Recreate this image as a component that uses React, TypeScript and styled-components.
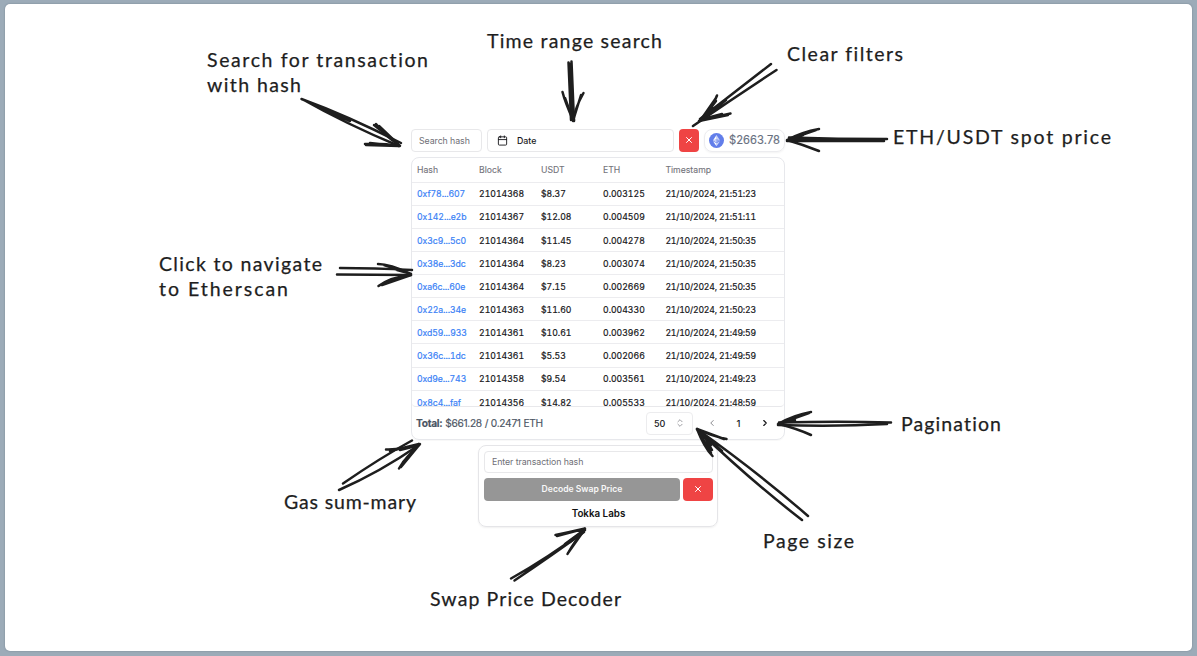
import React from 'react';
import styled, { createGlobalStyle } from 'styled-components';
import { Calendar, ChevronLeft, ChevronRight, ChevronsUpDown, X } from 'lucide-react';

const GlobalStyle = createGlobalStyle`
  * { box-sizing: border-box; }
  body { margin: 0; background: #9cabb8; font-family: Inter, "Liberation Sans", sans-serif; }
  button, input { font-family: inherit; }
`;

const Page = styled.div`
  height: 656px;
  padding: 4px 5px 5px;
  background: #9cabb8;
`;

const Board = styled.main`
  position: relative;
  height: 647px;
  border-radius: 5px;
  background: #fff;
  box-shadow: 0 0 2px #71808e;
  padding: 124px 0 0 406px;
`;

const Widget = styled.div`
  width: 374px;
  display: flex;
  flex-direction: column;
  align-items: center;
`;

const Toolbar = styled.div`
  width: 100%;
  height: 24px;
  display: flex;
  align-items: center;
  gap: 5px;
`;

const Field = styled.input<{ $width: string }>`
  width: ${(p) => p.$width};
  height: 23px;
  padding: 0 7px;
  border: 1px solid #e8e8ea;
  border-radius: 4px;
  font-size: 8.8px;
  letter-spacing: -0.08px;
  outline: none;
  &::placeholder { color: #707077; opacity: 1; }
`;

const DateButton = styled.button`
  flex: 1;
  height: 23px;
  display: flex;
  align-items: center;
  gap: 9px;
  padding: 0 9px;
  border: 1px solid #e8e8ea;
  border-radius: 4px;
  background: #fff;
  color: #18181b;
  font-size: 8.8px;
  font-weight: 500;
`;

const ClearButton = styled.button<{ $width: number }>`
  width: ${(p) => p.$width}px;
  height: 23px;
  display: flex;
  align-items: center;
  justify-content: center;
  padding: 0;
  border: 0;
  border-radius: 4px;
  background: #ef4444;
  color: #fff;
`;

const PriceBadge = styled.div`
  width: 81px;
  height: 23px;
  display: flex;
  align-items: center;
  gap: 5px;
  padding-left: 4px;
  border: 1px solid #ececef;
  border-radius: 8px;
  box-shadow: 0 1px 2px #0000000d;
  color: #687080;
  font-size: 11.2px;
  letter-spacing: 0.05px;
  -webkit-text-stroke: 0.15px;
`;

const Card = styled.section`
  width: 374px;
  height: 283px;
  margin-top: 4.5px;
  border: 1px solid #e7e8ec;
  border-radius: 8px;
  box-shadow: 0 1px 1px #00000008;
  overflow: hidden;
`;

const TableScroll = styled.div`
  height: 249.5px;
  overflow: hidden;
  border-bottom: 1px solid #e8e8eb;
  border-radius: 0 0 4px 4px;
`;

const Row = styled.div<{ $head?: boolean }>`
  display: grid;
  grid-template-columns: 62px 62px 62px 62.4px 1fr;
  align-items: center;
  height: ${(p) => (p.$head ? 25 : 23.15)}px;
  padding: ${(p) => (p.$head ? '0' : '1.4px')} 0 0 5px;
  border-bottom: 1px solid #ececef;
  color: ${(p) => (p.$head ? '#73737a' : '#18181b')};
  font-size: 8.7px;
  font-variant-numeric: tabular-nums;
  white-space: nowrap;
  -webkit-text-stroke: ${(p) => (p.$head ? '0.1px' : '0.2px')};
  & > :last-child { letter-spacing: ${(p) => (p.$head ? '0' : '-0.2px')}; }
`;

const HashLink = styled.a`
  color: #3b82f6;
  letter-spacing: -0.08px;
  text-decoration: none;
`;

const Footer = styled.div`
  height: 32px;
  display: flex;
  align-items: center;
  padding: 0 14px 0 4px;
  color: #4b5563;
`;

const Total = styled.p`
  flex: 1;
  margin: 0;
  font-size: 10.2px;
  letter-spacing: -0.29px;
  word-spacing: 0.2px;
  -webkit-text-stroke: 0.15px;
`;

const PageSize = styled.button`
  width: 47px;
  height: 23px;
  display: flex;
  align-items: center;
  justify-content: space-between;
  padding: 0 7px;
  border: 1px solid #ececee;
  border-radius: 4px;
  background: #fff;
  color: #18181b;
  font-size: 9px;
  font-weight: 500;
`;

const Pager = styled.nav`
  width: 63px;
  margin-left: 14px;
  display: flex;
  align-items: center;
  justify-content: space-between;
  color: #18181b;
  font-size: 9.5px;
  font-weight: 500;
`;

const Decoder = styled.section`
  width: 240px;
  height: 82px;
  margin: 5px 0 0 0;
  padding: 5px 4px 5px 5px;
  border: 1px solid #e5e5e8;
  border-radius: 8px;
  box-shadow: 0 1px 2px #0000000f;
  display: flex;
  flex-direction: column;
`;

const DecoderActions = styled.div`
  display: flex;
  gap: 3px;
  margin-top: 5px;
`;

const DecodeButton = styled.button`
  flex: 1;
  height: 23px;
  padding: 0;
  border: 0;
  border-radius: 4px;
  background: #969696;
  color: #f8f8f8;
  font-size: 8.6px;
  font-weight: 600;
`;

const Brand = styled.strong`
  margin-top: 6px;
  text-align: center;
  font-size: 9.8px;
  line-height: 14px;
  font-weight: 600;
  color: #111;
`;

const Notes = styled.svg`
  position: absolute;
  left: -5px;
  top: -4px;
  pointer-events: none;
  fill: none;
  stroke: #1e1e1e;
  stroke-linecap: round;
  stroke-linejoin: round;
  stroke-width: 2.5px;
`;

const NoteText = styled.text`
  fill: #1e1e1e;
  stroke: #1e1e1e;
  stroke-width: 0.25px;
  font-family: Excalifont, Virgil, Lato, sans-serif;
  font-size: 19.5px;
  font-variant-ligatures: none;
`;

const rows = [
  ['0xf78...607', '21014368', '$8.37', '0.003125', '21/10/2024, 21:51:23'],
  ['0x142...e2b', '21014367', '$12.08', '0.004509', '21/10/2024, 21:51:11'],
  ['0x3c9...5c0', '21014364', '$11.45', '0.004278', '21/10/2024, 21:50:35'],
  ['0x38e...3dc', '21014364', '$8.23', '0.003074', '21/10/2024, 21:50:35'],
  ['0xa6c...60e', '21014364', '$7.15', '0.002669', '21/10/2024, 21:50:35'],
  ['0x22a...34e', '21014363', '$11.60', '0.004330', '21/10/2024, 21:50:23'],
  ['0xd59...933', '21014361', '$10.61', '0.003962', '21/10/2024, 21:49:59'],
  ['0x36c...1dc', '21014361', '$5.53', '0.002066', '21/10/2024, 21:49:59'],
  ['0xd9e...743', '21014358', '$9.54', '0.003561', '21/10/2024, 21:49:23'],
  ['0x8c4...faf', '21014356', '$14.82', '0.005533', '21/10/2024, 21:48:59'],
];

// x, baseline, width, text
const notes: [number, number, number, string][] = [
  [207, 66.5, 221, 'Search for transaction'],
  [207, 91.5, 94, 'with hash'],
  [487, 47.5, 175, 'Time range search'],
  [787, 60.5, 116, 'Clear filters'],
  [893, 143.5, 218, 'ETH/USDT spot price'],
  [159, 270.5, 163, 'Click to navigate'],
  [159, 295.5, 129, 'to Etherscan'],
  [901, 430.5, 100, 'Pagination'],
  [284, 508.5, 132, 'Gas sum-mary'],
  [763, 547.5, 91, 'Page size'],
  [430, 605.5, 191, 'Swap Price Decoder'],
];

const strokes = [
  // search
  'M301.500 99 Q348 116 401 143 M302 99 Q346 124 399 146 M304 100 L350 121',
  'M376 124 Q385 136 399 145 L374 125 M379 126 L400 146 M365 144 Q382 143 399 146 L366 145 M370 143 L398 146',
  // date range
  'M568.500 62.500 L571 120 M571.500 61.500 L574 121 M570 64 L572 116',
  'M562.500 92 Q565 102 573 120 L565 98 M583.500 93 Q575 108 573 121 L581 95 M571 112 L574 120',
  // clear
  'M771 64 L700 119 M776.500 70 Q735 97 693 126 M726 100 L702 119',
  'M717 95.500 Q713 107 700 121 L716 98 M730.500 113.500 Q714 117 699 121 L728 115 M714 108 L702 120 M716 101 L703 118 M722 114 L703 119',
  // spot price
  'M887 139 Q838 139 789 137.500 M884 141 L787 141 M860 140 L790 139',
  'M819 129 Q802 132 787 140 L816 130 M819 151 Q804 145 787 140 M803 135 L790 141',
  // etherscan
  'M340 268 Q374 268 412 270 M337 274.500 L411 275',
  'M378 264 Q390 264 411 274 L384 265 M378.500 286 Q391 277 411 275 L382 285 M397 270 L408 273',
  // gas
  'M343 483.500 Q380 458 412 440.500 M339 490 Q380 472 419 445',
  'M386 449.500 Q402 450 419 444 L390 451 M399 468.500 Q405 458 420 444 L401 467 M403 462 L418 445 M400 450 L416 446',
  // decoder
  'M511 578.500 Q548 558 585 530 M514.500 580.500 Q554 554 584 532 M535 565 L580 535',
  'M555.500 535 Q570 532 585 528.500 L557 536 M567.500 554 Q574 542 585 529 L568 553 M570 542 L584 530 L565 544',
  // page size
  'M808 516 Q760 474 697 429 M802 520 Q750 480 697 429 M722 451 L700 432',
  'M726.500 439 Q711 436 697 429 L724 439 M712.500 456 Q704 447 697 429 L711 453 M701 433 L711 445 M703 434 L712 450',
  // pagination
  'M891 422.500 Q840 421 779 422.500 M887 424 Q835 427 778 425',
  'M811 412 Q794 415 778 424 L809 413 M811 435 Q798 429 779 424 M782 423 L795 420',
];

const EthLogo = () => (
  <svg width="15" height="15" viewBox="0 0 32 32">
    <circle cx="16" cy="16" r="16" fill="#627eea" />
    <path d="M16 4v8.900l7.500 3.300z" fill="#fff" fillOpacity=".65" />
    <path d="M16 4L8.500 16.200l7.500-3.300z" fill="#fff" />
    <path d="M16 22v6l7.500-10.400z" fill="#fff" fillOpacity=".65" />
    <path d="M16 28v-6l-7.500-4.400z" fill="#fff" />
    <path d="M16 20.600l7.500-4.400-7.500-3.300z" fill="#fff" fillOpacity=".3" />
    <path d="M8.500 16.200l7.500 4.400v-7.700z" fill="#fff" fillOpacity=".65" />
  </svg>
);

export default function App() {
  return (
    <Page>
      <GlobalStyle />
      <Board>
        <Widget>
          <Toolbar>
            <Field $width="71px" placeholder="Search hash" />
            <DateButton><Calendar size={11} strokeWidth={2} />Date</DateButton>
            <ClearButton $width={20}><X size={10} strokeWidth={2.4} /></ClearButton>
            <PriceBadge><EthLogo />$2663.78</PriceBadge>
          </Toolbar>
          <Card>
            <TableScroll>
              <Row $head>
                {['Hash', 'Block', 'USDT', 'ETH', 'Timestamp'].map((h) => <span key={h}>{h}</span>)}
              </Row>
              {rows.map(([hash, ...cells]) => (
                <Row key={hash}>
                  <HashLink>{hash}</HashLink>
                  {cells.map((c, i) => <span key={i}>{c}</span>)}
                </Row>
              ))}
            </TableScroll>
            <Footer>
              <Total><b>Total:</b> $661.28 / 0.2471 ETH</Total>
              <PageSize>50<ChevronsUpDown size={10} color="#8b8b90" /></PageSize>
              <Pager>
                <ChevronLeft size={10} color="#8b8b90" strokeWidth={2.4} />
                <span>1</span>
                <ChevronRight size={10} strokeWidth={2.8} />
              </Pager>
            </Footer>
          </Card>
          <Decoder>
            <Field $width="100%" placeholder="Enter transaction hash" />
            <DecoderActions>
              <DecodeButton>Decode Swap Price</DecodeButton>
              <ClearButton $width={30}><X size={10} strokeWidth={2.4} /></ClearButton>
            </DecoderActions>
            <Brand>Tokka Labs</Brand>
          </Decoder>
        </Widget>
        <Notes width="1197" height="656" viewBox="0 0 1197 656">
          {strokes.map((d) => <path key={d} d={d} />)}
          {notes.map(([x, y, w, text]) => (
            <NoteText key={text} x={x} y={y} textLength={w}>{text}</NoteText>
          ))}
        </Notes>
      </Board>
    </Page>
  );
}
